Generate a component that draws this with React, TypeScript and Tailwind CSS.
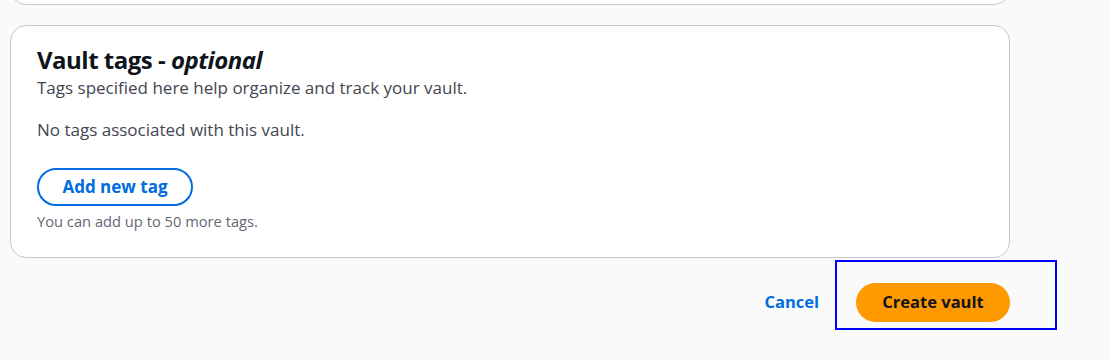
import React from "react";

export default function App() {
  const font = { fontFamily: '"Open Sans", "Noto Sans", Arial, sans-serif' };
  return (
    <div className="w-[1110px] h-[360px] bg-[#fafafa] overflow-hidden relative" style={font}>
      <div className="pl-[10px] w-[1010px]">
        <div className="h-[5px] overflow-hidden">
          <div className="h-[40px] -mt-[35px] bg-white border border-[#c6c6cd] rounded-[16px]" />
        </div>
        <div className="mt-[20px] h-[233px] bg-white border border-[#c6c6cd] rounded-[16px] pl-[26px] pt-[17px]">
          <h2 className="text-[24px] leading-[34px] font-bold text-[#0f141a] tracking-[-0.5px]">
            Vault tags - <em className="italic">optional</em>
          </h2>
          <p className="-mt-[1px] text-[17px] leading-[24px] text-[#424650]">
            Tags specified here help organize and track your vault.
          </p>
          <p className="mt-[18px] text-[17px] leading-[24px] text-[#424650]">
            No tags associated with this vault.
          </p>
          <button className="mt-[26px] h-[38px] w-[156px] border-2 border-[#006ce0] rounded-full text-[#006ce0] font-bold text-[17px]">
            Add new tag
          </button>
          <p className="mt-[5px] text-[14.7px] leading-[20px] text-[#656871]">
            You can add up to 50 more tags.
          </p>
        </div>
        <div className="flex justify-end items-center gap-[37px] mt-[25px]">
          <button className="text-[#006ce0] font-bold text-[16.5px]">Cancel</button>
          <button className="h-[39px] w-[154px] bg-[#ff9900] rounded-full text-[#0f141a] font-bold text-[16.5px]">
            Create vault
          </button>
        </div>
      </div>
      <div className="absolute left-[835px] top-[260px] w-[222px] h-[70px] border-2 border-[#0000ff] pointer-events-none" />
    </div>
  );
}
